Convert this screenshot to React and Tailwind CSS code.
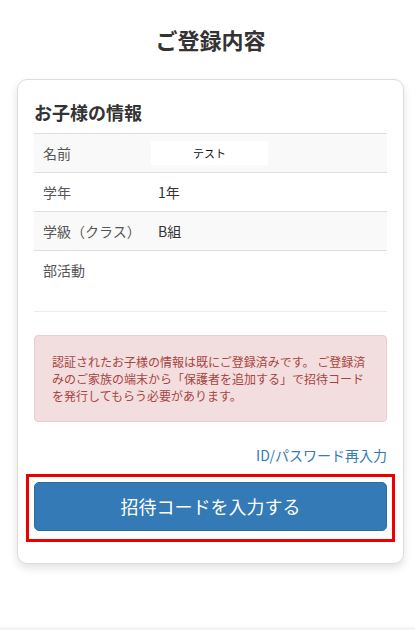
const rows = [
  { label: '名前', value: 'テスト', shaded: true, boxed: true },
  { label: '学年', value: '1年' },
  { label: '学級（クラス）', value: 'B組', shaded: true },
  { label: '部活動', value: '', tall: true },
]

function InfoRow({ label, value, shaded, boxed, tall }) {
  return (
    <div
      className={`flex border-t border-[#dedede] text-[14px] ${shaded ? 'bg-[#f9f9f9]' : 'bg-white'} ${
        tall ? 'h-[61px] items-start pt-[9px]' : 'h-[39px] items-center'
      }`}
    >
      <div className="w-[124px] shrink-0 pl-[9px] text-[#555]">{label}</div>
      {boxed ? (
        <div className="-ml-[7px] flex h-[24px] w-[117px] items-center justify-center bg-white text-[11px] text-[#111]">
          {value}
        </div>
      ) : (
        <div className="text-[#333]">{value}</div>
      )}
    </div>
  )
}

export default function App() {
  return (
    <div
      className="min-h-[630px] bg-white text-[#333]"
      style={{ fontFamily: '"Noto Sans CJK JP", "Noto Sans", sans-serif' }}
    >
      <h1 className="pl-[6px] pt-[24px] text-center text-[22px] font-bold leading-[30px] text-[#333]">ご登録内容</h1>

      <div className="ml-[17px] mr-[11px] mt-[25px] rounded-[10px] border-[1.5px] border-[#dcdcdc] bg-white px-[16px] pb-[21px] pt-[20px] shadow-[0_4px_8px_rgba(0,0,0,0.12)]">
        <h2 className="mb-[9px] text-[18px] font-bold leading-[24px] text-[#333]">お子様の情報</h2>

        <div className="border-b border-[#ececec]">
          {rows.map((r) => (
            <InfoRow key={r.label} {...r} />
          ))}
        </div>

        <div className="mt-[23px] rounded-[4px] border border-[#ebccd1] bg-[#f2dede] py-[17px] pl-[17px] pr-[14px] text-[12px] leading-[17px] text-[#a94442]">
          認証されたお子様の情報は既にご登録済みです。 ご登録済みのご家族の端末から「保護者を追加する」で招待コードを発行してもらう必要があります。
        </div>

        <div className="mt-[23px] text-right text-[14px] leading-[20px] text-[#337ab7]">ID/パスワード再入力</div>

        <div className="-mx-[8px] mt-[9px] border-[3px] border-[#ee0000] px-[5px] pb-[8px] pt-[5px]">
          <button className="flex h-[49px] w-full items-center justify-center rounded-[5px] border border-[#2e6da4] bg-[#337ab7] text-[18px] text-white">
            招待コードを入力する
          </button>
        </div>
      </div>

      <div className="mt-[63px] h-[40px] bg-[#f4f4f4]" />
    </div>
  )
}
